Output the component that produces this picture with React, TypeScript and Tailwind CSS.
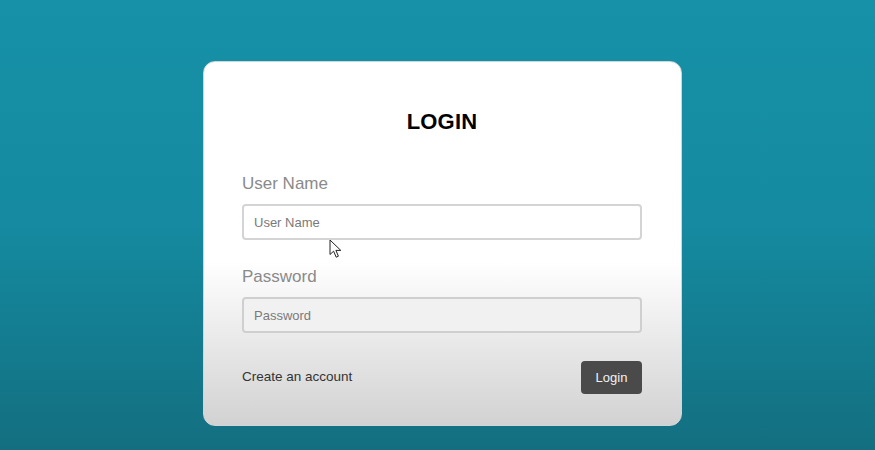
import React from "react";

const Cursor = () => (
  <svg
    className="absolute left-[125px] top-[177px] pointer-events-none"
    width="14"
    height="20"
    viewBox="0 0 14 20"
  >
    <path
      d="M1 1 L1 15.5 L4.6 12.2 L7.2 18.2 L9.4 17.2 L6.9 11.4 L11.8 11.4 Z"
      fill="#fff"
      stroke="#222"
      strokeWidth="1"
      strokeLinejoin="round"
    />
  </svg>
);

const App = () => {
  return (
    <div
      className="w-[875px] h-[450px] bg-gradient-to-b from-[#1691a7] via-[#158aa0] to-[#136f80] flex pl-[203px] pt-[61px] overflow-hidden"
      style={{ fontFamily: '"Liberation Sans", Arial, sans-serif' }}
    >
      <div className="relative w-[479px] h-[365px] rounded-[12px] border border-[#cfd6d8] bg-gradient-to-b from-white via-white via-55% to-[#d2d2d2] pl-[38px] pr-[39px] pt-[46px] flex flex-col">
        <h1 className="text-[22px] leading-[28px] font-bold text-black text-center tracking-[0.2px]">LOGIN</h1>

        <label className="mt-[36px] text-[17px] leading-[24px] text-[#8a8a8a]">User Name</label>
        <input
          type="text"
          placeholder="User Name"
          className="mt-[8px] h-[36px] w-full rounded-[4px] border-2 border-[#d4d4d4] bg-white px-[10px] text-[13px] text-[#333] placeholder:text-[#7a7a7a] outline-none"
        />

        <label className="mt-[25px] text-[17px] leading-[24px] text-[#8a8a8a]">Password</label>
        <input
          type="password"
          placeholder="Password"
          className="mt-[8px] h-[36px] w-full rounded-[4px] border-2 border-[#cfcfcf] bg-[#f1f1f1] px-[10px] text-[13px] text-[#333] placeholder:text-[#7a7a7a] outline-none"
        />

        <div className="mt-[28px] flex items-center justify-between">
          <a href="#" className="text-[13.5px] text-[#333]">Create an account</a>
          <button className="w-[61px] h-[33px] rounded-[4px] bg-[#4a4a4a] text-[13px] text-[#f2f2f2]">
            Login
          </button>
        </div>

        <Cursor />
      </div>
    </div>
  );
};

export default App;
